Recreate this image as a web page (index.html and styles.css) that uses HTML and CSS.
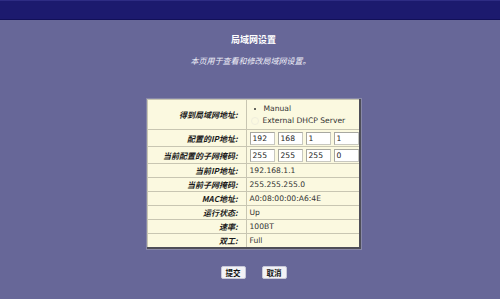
FILE: index.html
```html
<!DOCTYPE html>
<html>
<head>
<meta charset="utf-8">
<link rel="stylesheet" href="styles.css">
</head>
<body>
<div class="topbar"></div>
<div class="main">
  <div class="title">局域网设置</div>
  <div class="subtitle">本页用于查看和修改局域网设置。</div>
  <table class="settings">
    <tr class="r-radio">
      <td class="lbl">得到局域网地址:</td>
      <td class="val">
        <div class="opt"><span class="dot"></span>Manual</div>
        <div class="opt"><span class="ring"></span>External DHCP Server</div>
      </td>
    </tr>
    <tr class="r-input">
      <td class="lbl">配置的IP地址:</td>
      <td class="val"><div class="ips"><span class="box">192</span><span class="box">168</span><span class="box">1</span><span class="box">1</span></div></td>
    </tr>
    <tr class="r-input">
      <td class="lbl">当前配置的子网掩码:</td>
      <td class="val"><div class="ips"><span class="box">255</span><span class="box">255</span><span class="box">255</span><span class="box">0</span></div></td>
    </tr>
    <tr class="r-text"><td class="lbl">当前IP地址:</td><td class="val">192.168.1.1</td></tr>
    <tr class="r-text"><td class="lbl">当前子网掩码:</td><td class="val">255.255.255.0</td></tr>
    <tr class="r-text"><td class="lbl">MAC地址:</td><td class="val">A0:08:00:00:A6:4E</td></tr>
    <tr class="r-text"><td class="lbl">运行状态:</td><td class="val">Up</td></tr>
    <tr class="r-text"><td class="lbl">速率:</td><td class="val">100BT</td></tr>
    <tr class="r-text"><td class="lbl">双工:</td><td class="val">Full</td></tr>
  </table>
  <div class="buttons">
    <span class="btn">提交</span>
    <span class="btn">取消</span>
  </div>
</div>
</body>
</html>
```
FILE: styles.css
```css
html, body {
  margin: 0;
  padding: 0;
}
body {
  background: #676798;
  width: 500px;
  height: 299px;
  overflow: hidden;
  font-family: "DejaVu Sans", "Noto Sans CJK SC", sans-serif;
}
.topbar {
  height: 18px;
  background: #1c1a6e;
  border-top: 1px solid #2e2c84;
  border-bottom: 1px solid #121058;
}
.main {
  padding-left: 7px;
  display: flex;
  flex-direction: column;
  align-items: center;
}
.title {
  margin-top: 14px;
  font-family: "Noto Sans CJK SC", sans-serif;
  font-weight: bold;
  font-size: 9px;
  line-height: 12px;
  color: #ffffff;
}
.subtitle {
  margin-top: 9px;
  font-family: "Noto Sans CJK SC", sans-serif;
  font-style: italic;
  font-size: 8px;
  line-height: 12px;
  color: #f0f0f8;
  margin-right: 6px;
}
.settings {
  margin-top: 32px;
  width: 214px;
  border-collapse: collapse;
  background: #fbf9e0;
  border-top: 1px solid #f4f4ee;
  border-left: 1px solid #9a9a90;
  border-right: 2px solid #4e4e58;
  border-bottom: 2px solid #4e4e58;
  box-shadow: 0 0 0 1px #8888a8;
}
.settings td {
  padding: 0;
  border: 1px solid #c8c6b2;
  vertical-align: middle;
}
.lbl {
  width: 96px;
  text-align: right;
  padding-right: 8px !important;
  font-family: "Noto Sans CJK SC", sans-serif;
  font-weight: bold;
  font-style: italic;
  font-size: 8px;
  color: #1a1a1a;
  white-space: nowrap;
}
.val {
  padding-left: 3px !important;
  font-size: 7.6px;
  color: #333333;
  white-space: nowrap;
}
.r-radio td { height: 29px; }
.r-input td { height: 16px; }
.r-text td { height: 13px; }
.opt {
  display: flex;
  align-items: center;
  height: 12px;
  line-height: 12px;
}
.dot {
  width: 2px;
  height: 2px;
  border-radius: 50%;
  background: #333;
  margin: 0 8px 0 4px;
}
.ring {
  width: 8px;
  height: 8px;
  border-radius: 50%;
  border: 1px solid #f0eedd;
  margin: 0 4px 0 1px;
  box-sizing: border-box;
}
.ips {
  display: flex;
  gap: 3px;
}
.box {
  width: 25px;
  height: 13px;
  box-sizing: border-box;
  background: #ffffff;
  border: 1px solid #c8c8c0;
  border-top-color: #a8a8a0;
  border-left-color: #a8a8a0;
  font-size: 7.6px;
  line-height: 11px;
  padding-left: 2px;
  color: #222;
}
.buttons {
  margin-top: 17px;
  display: flex;
  gap: 16px;
}
.btn {
  width: 25px;
  height: 13px;
  box-sizing: border-box;
  border-radius: 2px;
  background: #f2f2f6;
  border: 1px solid #c8c8d8;
  font-family: "Noto Sans CJK SC", sans-serif;
  font-weight: bold;
  font-size: 7.5px;
  line-height: 11px;
  text-align: center;
  color: #111;
}
```
